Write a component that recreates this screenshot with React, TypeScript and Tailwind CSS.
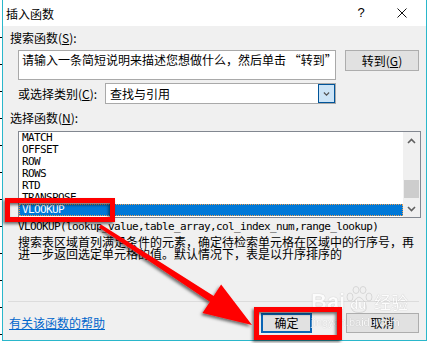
import React from "react";

function Chevron({ dir, cls }: { dir: "up" | "down"; cls: string }) {
  return (
    <svg width="9" height="6" viewBox="0 0 9 6" className={cls}>
      {dir === "up" ? (
        <polyline points="1,5 4.5,1.5 8,5" fill="none" stroke="currentColor" strokeWidth="1.6" />
      ) : (
        <polyline points="1,1 4.5,4.5 8,1" fill="none" stroke="currentColor" strokeWidth="1.6" />
      )}
    </svg>
  );
}

export default function App() {
  const ticks = Array.from({ length: 12 });
  const items = ["MATCH", "OFFSET", "ROW", "ROWS", "RTD", "TRANSPOSE"];
  return (
    <div className="relative w-[429px] h-[343px] overflow-hidden bg-white font-['Noto_Sans_CJK_SC',sans-serif] text-[12px] text-black">
      <div className="flex h-full">
        <div className="w-[2px] shrink-0 flex flex-col pt-[37px]">
          {ticks.map((_, i) => (
            <div key={i} className="h-[27px] shrink-0 border-t border-black" />
          ))}
        </div>
        <div className="w-[425px] h-[341px] shrink-0 flex flex-col border-x border-b border-[#2ab7cb]">
          {/* title bar */}
          <div className="h-[26px] shrink-0 bg-white flex items-center pl-[3px] pr-[19px]">
            <span className="leading-[16px] mt-[1px]">插入函数</span>
            <div className="ml-auto flex items-center gap-[31px]">
              <span className="w-[10px] text-center text-[13px] leading-[16px] font-['Liberation_Sans',sans-serif]">?</span>
              <svg width="10" height="10" viewBox="0 0 10 10">
                <path d="M0.5 0.5 L9.5 9.5 M9.5 0.5 L0.5 9.5" stroke="#111" strokeWidth="1" />
              </svg>
            </div>
          </div>
          {/* body */}
          <div className="flex-1 bg-[#f0f0f0] flex flex-col pt-[4px]">
            <div className="h-[16px] leading-[16px] pl-[7px]">
              搜索函数(<span className="underline">S</span>):
            </div>
            <div className="mt-[4px] flex items-start pl-[15px]">
              <div className="w-[318px] h-[30px] bg-white border border-[#a9a9a9] pl-[3px] pt-[1px] leading-[16px] whitespace-nowrap overflow-hidden">
                请输入一条简短说明来描述您想做什么，然后单击 “转到”
              </div>
              <div className="ml-[9px] w-[74px] h-[21px] bg-[#e1e1e1] border border-[#adadad] flex items-center justify-center leading-[16px]">
                转到(<span className="underline">G</span>)
              </div>
            </div>
            <div className="mt-[3px] h-[21px] flex items-center pl-[15px]">
              <div className="w-[87px] leading-[16px]">
                或选择类别(<span className="underline">C</span>):
              </div>
              <div className="w-[231px] h-[21px] bg-white border border-[#a9a9a9] flex items-center">
                <span className="pl-[4px] leading-[16px]">查找与引用</span>
                <div className="ml-auto w-[17px] h-[19px] bg-[#cce4f7] border border-[#005499] flex items-center justify-center">
                  <Chevron dir="down" cls="text-[#555] scale-75" />
                </div>
              </div>
            </div>
            <div className="mt-[6px] h-[16px] leading-[16px] pl-[7px]">
              选择函数(<span className="underline">N</span>):
            </div>
            <div className="mt-[5px] ml-[15px] w-[403px] h-[87px] bg-white border border-[#828790] flex font-['DejaVu_Sans_Mono',monospace] text-[11px] tracking-[-0.62px]">
              <div className="flex-1 flex flex-col">
                {items.map((t) => (
                  <div key={t} className="h-[12px] leading-[12px] pl-[3px] overflow-hidden">
                    {t}
                  </div>
                ))}
                <div className="h-[12px] leading-[12px] pl-[3px] bg-[#0078d7] text-white outline-1 outline-dotted outline-[#f0a050] -outline-offset-1">
                  VLOOKUP
                </div>
              </div>
              <div className="w-[17px] bg-[#f0f0f0] flex flex-col">
                <div className="h-[17px] flex items-center justify-center">
                  <Chevron dir="up" cls="text-[#606060]" />
                </div>
                <div className="flex-1 flex flex-col items-center">
                  <div className="mt-[31px] w-[15px] h-[18px] bg-[#cdcdcd]" />
                </div>
                <div className="h-[17px] flex items-center justify-center">
                  <Chevron dir="down" cls="text-[#606060]" />
                </div>
              </div>
            </div>
            <div className="mt-[3px] pl-[15px] h-[12px] leading-[12px] whitespace-nowrap font-['DejaVu_Sans_Mono',monospace] text-[11px] tracking-[-0.62px]">
              VLOOKUP(lookup_value,table_array,col_index_num,range_lookup)
            </div>
            <div className="mt-[3px] pl-[15px] leading-[12px] whitespace-nowrap">
              <div>搜索表区域首列满足条件的元素，确定待检索单元格在区域中的行序号，再</div>
              <div>进一步返回选定单元格的值。默认情况下，表是以升序排序的</div>
            </div>
            <div className="mt-[41px] ml-[5px] w-[411px] h-[1px] bg-[#dcdcdc]" />
            <div className="mt-[11px] h-[20px] flex items-center pl-[6px] pr-[7px]">
              <span className="text-[#0066cc] underline leading-[16px]">有关该函数的帮助</span>
              <div className="ml-auto w-[51px] h-[20px] bg-[#e1e1e1] border-2 border-[#0a64b4] flex items-center justify-center leading-[16px]">
                确定
              </div>
              <div className="ml-[34px] w-[73px] h-[20px] bg-[#e1e1e1] border border-[#adadad] flex items-center justify-center leading-[16px]">
                取消
              </div>
            </div>
          </div>
        </div>
      </div>

      {/* watermark */}
      <div className="absolute left-[311px] top-[286px] flex items-end text-white opacity-80 [text-shadow:0_0_1px_rgba(0,0,0,0.35)] pointer-events-none">
        <span className="font-['Liberation_Sans',sans-serif] font-bold text-[22px] leading-[24px]">Bai</span>
        <div className="relative w-[28px] h-[28px]">
          <svg width="28" height="28" viewBox="0 0 28 28" className="absolute inset-0">
            <g fill="none" stroke="#d0d0d0" strokeWidth="1">
              <ellipse cx="5" cy="11" rx="3" ry="4" />
              <ellipse cx="11" cy="4" rx="3" ry="3.5" />
              <ellipse cx="18" cy="4" rx="3" ry="3.5" />
              <ellipse cx="24" cy="11" rx="3" ry="4" />
              <path d="M14 11 C8 13 5 22 8 25 C11 27 17 27 20 25 C23 22 20 13 14 11 Z" />
            </g>
          </svg>
          <span className="absolute left-[5px] top-[12px] font-['Liberation_Sans',sans-serif] font-bold text-[13px] leading-[14px]">du</span>
        </div>
        <span className="ml-[1px] text-[17px] leading-[24px]">经验</span>
      </div>
      <div className="absolute left-[311px] top-[316px] text-white opacity-80 text-[11px] leading-[12px] font-['Liberation_Sans',sans-serif] [text-shadow:0_0_1px_rgba(0,0,0,0.35)] pointer-events-none">
        jingyan.baidu.com
      </div>

      {/* annotation overlay */}
      <svg width="429" height="343" viewBox="0 0 429 343" className="absolute inset-0 pointer-events-none">
        <defs>
          <filter id="sh" x="-20%" y="-20%" width="140%" height="140%">
            <feDropShadow dx="-1.5" dy="2" stdDeviation="1.8" floodColor="#000" floodOpacity="0.55" />
          </filter>
        </defs>
        <g filter="url(#sh)">
          <rect x="7.5" y="200.5" width="105" height="19" fill="none" stroke="#ff0000" strokeWidth="5" />
          <rect x="256.5" y="309.5" width="83" height="28" fill="none" stroke="#ff0000" strokeWidth="5" />
          <polygon
            points="101,224.5 213.7,295.9 221.1,284.6 252,325 202.5,313 209.9,301.7 99,227.5"
            fill="#ff0000"
          />
        </g>
      </svg>
    </div>
  );
}
